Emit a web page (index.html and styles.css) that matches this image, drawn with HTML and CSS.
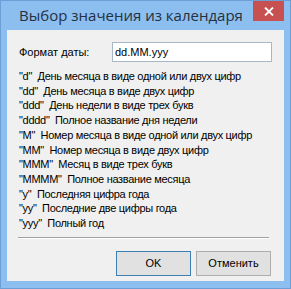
FILE: index.html
```html
<!DOCTYPE html>
<html>
	<head>
		<title>Выбор значения из календаря</title>
		<link rel="stylesheet" href="styles.css">
	</head>
	<body>
		<div id="dlg_window">
			<div id="dlg_title_bar">
				<div id="dlg_title">Выбор значения из календаря</div>
				<div id="dlg_close">
					<svg width="10" height="9" viewBox="0 0 10 9">
						<path d="M1 0.5 L9 8.5 M9 0.5 L1 8.5" stroke="#ffffff" stroke-width="1.8" fill="none"/>
					</svg>
				</div>
			</div>
			<div id="dlg_client">
				<div id="format_row">
					<label id="format_label">Формат даты:</label>
					<input id="format_input" value="dd.MM.yyy">
				</div>
				<div id="format_help">
					<div>"d"&nbsp; День месяца в виде одной или двух цифр</div>
					<div>"dd"&nbsp; День месяца в виде двух цифр</div>
					<div>"ddd"&nbsp; День недели в виде трех букв</div>
					<div>"dddd"&nbsp; Полное название дня недели</div>
					<div>"M"&nbsp; Номер месяца в виде одной или двух цифр</div>
					<div>"MM"&nbsp; Номер месяца в виде двух цифр</div>
					<div>"MMM"&nbsp; Месяц в виде трех букв</div>
					<div>"MMMM"&nbsp; Полное название месяца</div>
					<div>"y"&nbsp; Последняя цифра года</div>
					<div>"yy"&nbsp; Последние две цифры года</div>
					<div>"yyy"&nbsp; Полный год</div>
				</div>
				<div id="dlg_separator"></div>
				<div id="dlg_buttons">
					<button id="ok_button" class="dlg_button">OK</button>
					<button id="cancel_button" class="dlg_button">Отменить</button>
				</div>
			</div>
		</div>
	</body>
</html>
```

FILE: styles.css
```css
body
{
	margin:0;
	font-family:"Liberation Sans", Arial, sans-serif;
	font-size:11px;
	color:#000000;
}
#dlg_window
{
	width:291px;
	height:289px;
	box-sizing:border-box;
	border:1px solid #6b9fd6;
	background:#8dbef0;
	padding:0 6px 7px 6px;
	display:flex;
	flex-direction:column;
}
/*=============================*/
#dlg_title_bar
{
	height:29px;
	display:flex;
	flex-direction:row;
	align-items:flex-start;
}
#dlg_title
{
	flex:1;
	text-align:center;
	font-family:"Open Sans", "Noto Sans", sans-serif;
	font-size:15px;
	line-height:29px;
	color:#23313f;
	margin-right:-2px;
}
#dlg_close
{
	width:31px;
	height:20px;
	background:#c75050;
	display:flex;
	justify-content:center;
	align-items:center;
}
/*=============================*/
#dlg_client
{
	flex:1;
	background:#f0f0f0;
	padding:12px 12px 0 12px;
	display:flex;
	flex-direction:column;
}
#format_row
{
	display:flex;
	flex-direction:row;
	align-items:center;
	height:20px;
}
#format_label
{
	width:93px;
}
#format_input
{
	width:160px;
	height:20px;
	box-sizing:border-box;
	border:1px solid #a9b6c6;
	background:#ffffff;
	font-family:"Liberation Sans", Arial, sans-serif;
	font-size:11px;
	padding:0 2px;
	margin:0;
	outline:none;
}
#format_help
{
	margin-top:7px;
	line-height:14.7px;
	letter-spacing:-0.3px;
	white-space:nowrap;
}
/*============================*/
#dlg_separator
{
	margin:6px 3px 0 -1px;
	height:1px;
	background:#a0a0a0;
	border-bottom:1px solid #ffffff;
}
#dlg_buttons
{
	margin-top:12px;
	display:flex;
	flex-direction:row;
	justify-content:flex-end;
	gap:5px;
	padding-right:1px;
}
.dlg_button
{
	width:75px;
	height:25px;
	border:1px solid #adadad;
	background:#e1e1e1;
	font-family:"Liberation Sans", Arial, sans-serif;
	font-size:11px;
	color:#000000;
	padding:0;
}
#ok_button
{
	border-color:#3c7fb1;
}
```
